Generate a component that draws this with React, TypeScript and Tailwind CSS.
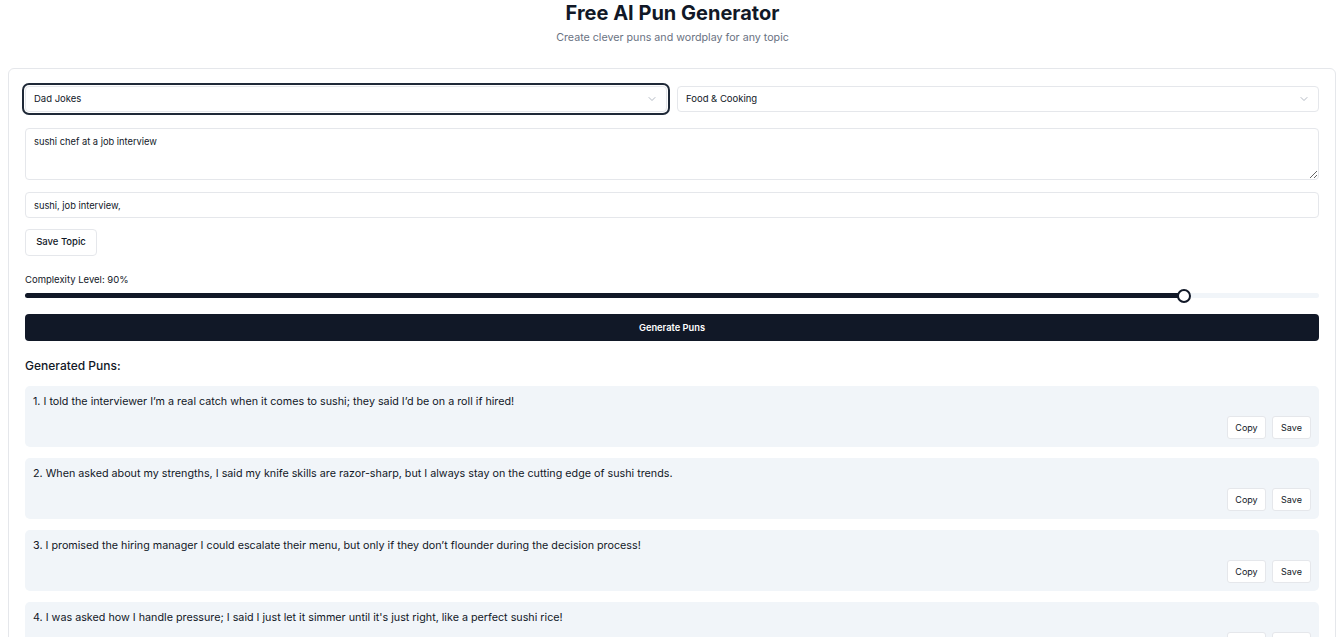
import { ChevronDown } from 'lucide-react'

const puns = [
  "1. I told the interviewer I’m a real catch when it comes to sushi; they said I’d be on a roll if hired!",
  "2. When asked about my strengths, I said my knife skills are razor-sharp, but I always stay on the cutting edge of sushi trends.",
  "3. I promised the hiring manager I could escalate their menu, but only if they don’t flounder during the decision process!",
  "4. I was asked how I handle pressure; I said I just let it simmer until it's just right, like a perfect sushi rice!",
]

function Select({ value, focused }: { value: string; focused?: boolean }) {
  return (
    <div
      className={
        focused
          ? 'flex-1 flex items-center justify-between h-[26px] px-[8px] rounded-[4px] border border-gray-200 bg-white ring-2 ring-[#1f2937] ring-offset-1'
          : 'flex-1 flex items-center justify-between h-[26px] px-[8px] rounded-[4px] border border-gray-200 bg-white'
      }
    >
      <span className="text-[9.5px] text-[#111827]">{value}</span>
      <ChevronDown className="w-3 h-3 text-gray-400" strokeWidth={1.5} />
    </div>
  )
}

export default function App() {
  const complexity = 90
  // keep the thumb inside the track, the way radix does it
  const thumbOffset = 7 - (complexity / 50) * 7

  return (
    <div className="h-screen overflow-hidden bg-white font-['Inter',sans-serif] text-[#111827]">
      <header className="h-[68px] pl-[5px] text-center">
        <h1 className="text-[20px] leading-[26px] font-bold">Free AI Pun Generator</h1>
        <p className="mt-[5px] text-[10.7px] leading-[14px] text-gray-500">Create clever puns and wordplay for any topic</p>
      </header>

      <div className="ml-[8px] mr-[4px] rounded-[6px] border border-gray-200 px-[16px] pt-[17px] pb-4">
        <div className="flex items-center gap-[10px]">
          <Select value="Dad Jokes" focused />
          <Select value="Food & Cooking" />
        </div>

        <textarea
          defaultValue="sushi chef at a job interview"
          className="mt-[16px] block w-full h-[52px] rounded-[4px] border border-gray-200 px-[8px] py-[6px] text-[9.3px] outline-none"
        />

        <input
          defaultValue="sushi, job interview,"
          className="mt-[12px] block w-full h-[26px] rounded-[4px] border border-gray-200 px-[8px] text-[9.3px] outline-none"
        />

        <button className="mt-[11px] h-[27px] w-[72px] rounded-[4px] border border-gray-200 bg-white text-[9.5px] font-medium">
          Save Topic
        </button>

        <div className="mt-[18px] text-[9.5px] leading-[12px]">Complexity Level: {complexity}%</div>
        <div className="relative mt-[7px] h-[5px] rounded-full bg-[#f1f5f9]">
          <div className="h-full rounded-full bg-[#111827]" style={{ width: `${complexity}%` }} />
          <div
            className="absolute top-1/2 -translate-y-1/2 -translate-x-1/2 w-[14px] h-[14px] rounded-full border-2 border-[#111827] bg-white"
            style={{ left: `calc(${complexity}% + ${thumbOffset}px)` }}
          />
        </div>

        <button className="mt-[16px] w-full h-[27px] rounded-[4px] bg-[#111827] text-white text-[9.3px] font-semibold">
          Generate Puns
        </button>

        <h2 className="mt-[17px] text-[12px] leading-[16px] font-medium">Generated Puns:</h2>

        <div className="mt-[12px] flex flex-col gap-[11px]">
          {puns.map(p => (
            <div key={p} className="h-[61px] rounded-[5px] bg-[#f1f5f9] px-[8px] pt-[9px] pb-[8px] flex flex-col justify-between">
              <p className="text-[10.75px] leading-[14px]">{p}</p>
              <div className="flex justify-end gap-[6px]">
                <button className="h-[23px] w-[39px] rounded-[3px] border border-gray-200 bg-white text-[9px]">Copy</button>
                <button className="h-[23px] w-[39px] rounded-[3px] border border-gray-200 bg-white text-[9px]">Save</button>
              </div>
            </div>
          ))}
        </div>
      </div>
    </div>
  )
}
